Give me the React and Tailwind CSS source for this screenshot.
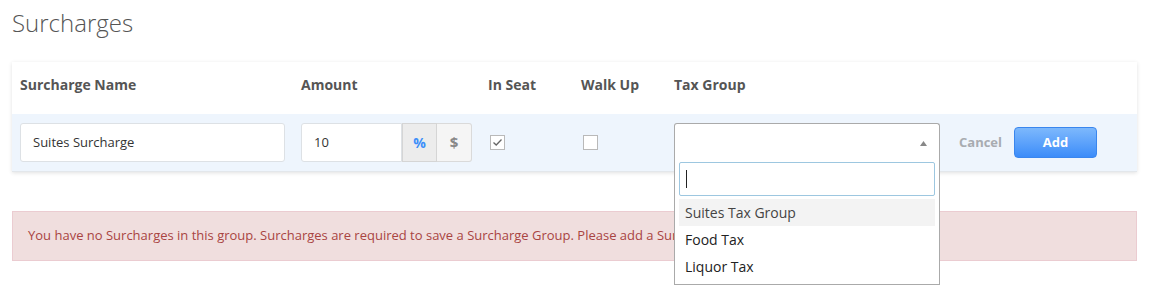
import React from 'react';

const options = ['Suites Tax Group', 'Food Tax', 'Liquor Tax'];

export default function App() {
  return (
    <div className="w-[1150px] h-[300px] bg-white text-[#333] font-['Open_Sans',sans-serif] overflow-hidden">
      <div className="px-3 pt-[10px]">
        <h2 className="text-[24px] leading-[26px] font-light text-[#555]">Surcharges</h2>

        <div className="mt-[26px] w-[1125px] bg-white shadow-[0_1px_4px_rgba(0,0,0,0.12)]">
          {/* header */}
          <div className="flex h-[52px] items-center pb-[8px] text-[14px] font-bold text-[#555]">
            <div className="w-[281px] pl-2">Surcharge Name</div>
            <div className="w-[187px] pl-2">Amount</div>
            <div className="w-[93px] pl-2">In Seat</div>
            <div className="w-[93px] pl-2">Walk Up</div>
            <div className="pl-2">Tax Group</div>
          </div>

          {/* body row */}
          <div className="flex h-[58px] items-center bg-[#eef5fd] border-b border-[#e3e7eb] text-[13px]">
            <div className="w-[281px] pl-2">
              <div className="flex h-[39px] w-[265px] items-center rounded-[3px] border border-[#dde1e5] bg-white px-3 text-[#333]">
                Suites Surcharge
              </div>
            </div>
            <div className="w-[187px] pl-2 flex">
              <div className="flex h-[39px] w-[101px] items-center rounded-l-[3px] border border-[#dde1e5] bg-white px-3">10</div>
              <div className="flex h-[39px] w-[35px] items-center justify-center border border-[#d5d5d5] bg-[#ececec] font-bold text-[14px] text-[#3d8ff9]">%</div>
              <div className="flex h-[39px] w-[35px] items-center justify-center rounded-r-[3px] border border-l-0 border-[#dadada] bg-[#f5f5f5] font-bold text-[15px] text-[#888]">$</div>
            </div>
            <div className="w-[93px] pl-[10px]">
              <div className="flex h-[15px] w-[15px] items-center justify-center border border-[#b9b9b9] bg-white">
                <svg width="11" height="9" viewBox="0 0 11 9" fill="none">
                  <path d="M1.5 4.5 L4.2 7 L9.5 1.5" stroke="#666" strokeWidth="1.3" />
                </svg>
              </div>
            </div>
            <div className="w-[93px] pl-[10px]">
              <div className="h-[15px] w-[15px] border border-[#b9b9b9] bg-white" />
            </div>
            <div className="pl-2 flex items-center">
              <div className="relative w-[266px]">
                <div className="flex h-[39px] items-center justify-end rounded-t-[3px] border border-b-0 border-[#aaa] bg-white pr-[12px]">
                  <svg width="7" height="5" viewBox="0 0 7 5">
                    <path d="M0 5 L3.5 0 L7 5 Z" fill="#888" />
                  </svg>
                </div>
                <div className="absolute left-0 top-[39px] z-10 w-[266px] border border-t-0 border-[#aaa] bg-white px-[4px] pb-[4px]">
                  <div className="flex h-[34px] items-center rounded-[2px] border border-[#9dc7e0] px-[6px]">
                    <div className="h-[18px] w-px bg-[#222]" />
                  </div>
                  <div className="mt-[3px] text-[14px]">
                    {options.map((o, i) => (
                      <div
                        key={o}
                        className={`flex h-[27px] items-center px-[6px] ${i === 0 ? 'bg-[#f3f3f3] text-[#444]' : 'text-[#222]'}`}
                      >
                        {o}
                      </div>
                    ))}
                  </div>
                </div>
              </div>
              <span className="ml-[19px] font-bold text-[#a8acb1]">Cancel</span>
              <button className="ml-[12px] h-[31px] w-[83px] rounded-[4px] border border-[#3a86ee] bg-gradient-to-b from-[#7db8fc] to-[#3b8cf9] font-bold text-white">
                Add
              </button>
            </div>
          </div>
        </div>

        <div className="mt-[39px] flex h-[50px] w-[1125px] items-center border border-[#ebccd1] bg-[#f0dede] px-[15px] text-[13px] text-[#a94442]">
          You have no Surcharges in this group. Surcharges are required to save a Surcharge Group. Please add a Surcharge to continue.
        </div>
      </div>
    </div>
  );
}
